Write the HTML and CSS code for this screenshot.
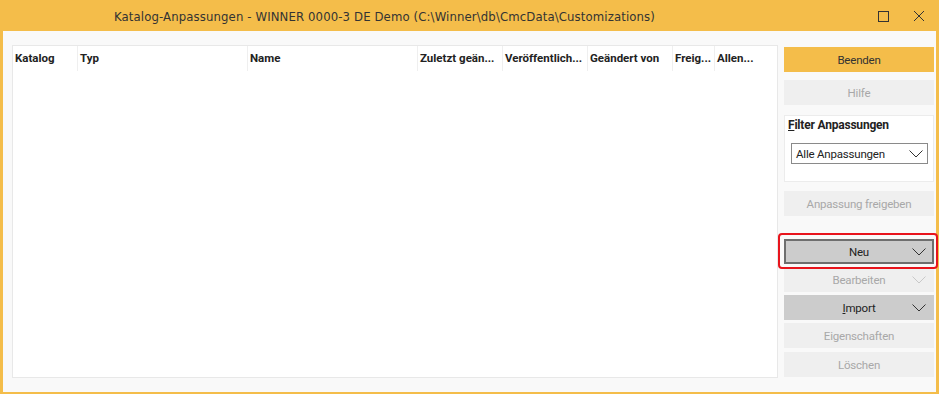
FILE: index.html
```html
<!DOCTYPE html>
<html lang="de">
<head>
    <meta charset="UTF-8">
    <title>Katalog-Anpassungen</title>
    <link rel="stylesheet" href="styles.css">
</head>
<body>
    <div class="window">
        <div class="titlebar">
            <span class="title">Katalog-Anpassungen - WINNER 0000-3 DE Demo (C:\Winner\db\CmcData\Customizations)</span>
            <span class="win-btn">
                <svg width="12" height="12" viewBox="0 0 12 12"><rect x="1.5" y="1.5" width="10" height="10" fill="none" stroke="#333" stroke-width="1"/></svg>
            </span>
            <span class="win-btn">
                <svg width="12" height="12" viewBox="0 0 12 12"><path d="M1 1 L11 11 M11 1 L1 11" stroke="#333" stroke-width="1"/></svg>
            </span>
        </div>
        <div class="content">
            <div class="list">
                <div class="list-head">
                    <div class="col c-katalog">Katalog</div>
                    <div class="col c-typ">Typ</div>
                    <div class="col c-name">Name</div>
                    <div class="col c-mid">Zuletzt geän...</div>
                    <div class="col c-mid">Veröffentlich...</div>
                    <div class="col c-mid">Geändert von</div>
                    <div class="col c-small">Freig...</div>
                    <div class="col c-small">Allen...</div>
                </div>
            </div>

            <div class="side">
                <div class="btn primary">Beenden</div>
                <div class="btn disabled gap-8">Hilfe</div>

                <div class="group">
                    <div class="group-title"><u>F</u>ilter Anpassungen</div>
                    <div class="select">
                        <span>Alle Anpassungen</span>
                        <svg width="14" height="8" viewBox="0 0 14 8"><polyline points="0.5,0.5 7,7 13.5,0.5" fill="none" stroke="#333" stroke-width="1"/></svg>
                    </div>
                </div>

                <div class="btn disabled gap-9">Anpassung freigeben</div>

                <div class="highlight">
                    <div class="btn drop active">
                        <span></span>
                        <span>Neu</span>
                        <svg width="14" height="8" viewBox="0 0 14 8"><polyline points="0.5,0.5 7,7 13.5,0.5" fill="none" stroke="#333" stroke-width="1"/></svg>
                    </div>
                </div>
                <div class="btn drop disabled gap-3">
                    <span></span>
                    <span>Bearbeiten</span>
                    <svg width="14" height="8" viewBox="0 0 14 8"><polyline points="0.5,0.5 7,7 13.5,0.5" fill="none" stroke="#c8c8c8" stroke-width="1"/></svg>
                </div>
                <div class="btn drop plain gap-3">
                    <span></span>
                    <span><u>I</u>mport</span>
                    <svg width="14" height="8" viewBox="0 0 14 8"><polyline points="0.5,0.5 7,7 13.5,0.5" fill="none" stroke="#333" stroke-width="1"/></svg>
                </div>
                <div class="btn disabled gap-3">Eigenschaften</div>
                <div class="btn disabled gap-4">Löschen</div>
            </div>
        </div>
    </div>
</body>
</html>
```

FILE: styles.css
```css
body { margin: 0; background: #fff; font-family: Roboto, "Noto Sans", sans-serif; font-size: 12px; color: #222; }

.window {
    width: 939px; height: 394px; background: #f4bd4a;
    display: flex; flex-direction: column;
}
.titlebar { height: 31px; flex-shrink: 0; display: flex; align-items: center; }
.title {
    padding-left: 114px; font-family: "DejaVu Sans Condensed", "Liberation Sans Narrow", sans-serif;
    font-size: 13px; letter-spacing: 0.12px; color: #333; flex: 1; padding-top: 2px;
}
.win-btn { width: 12px; height: 12px; margin-right: 24px; display: flex; }
.win-btn:last-child { margin-right: 14px; }

.content {
    flex: 1; min-height: 0; margin: 0 3px 2px 3px; background: #f9f9f9;
    display: grid; grid-template-columns: 766px 150px; gap: 6px;
    padding: 14px 2px 14px 9px;
}

.list { background: #fff; border: 1px solid #e8e8e8; }
.list-head { display: flex; height: 25px; }
.col {
    box-sizing: border-box; border-right: 1px solid #efefef; padding: 0 2px;
    font-weight: bold; font-size: 11.5px; line-height: 25px; color: #222;
    white-space: nowrap; overflow: hidden;
}
.c-katalog { width: 65px; }
.c-typ, .c-name { width: 170px; }
.c-mid { width: 85px; }
.c-small { width: 42px; }
.c-small:last-child { width: 43px; border-right: none; }

.side { display: flex; flex-direction: column; padding-top: 2px; font-size: 11.5px; letter-spacing: -0.2px; }
.btn {
    height: 25px; flex-shrink: 0; box-sizing: border-box; display: flex; align-items: center;
    justify-content: center;
}
.primary { background: #f4bd4a; color: #333; }
.disabled { background: #efefef; color: #a8a8a8; }
.plain { background: #cccccc; color: #222; }
.active { background: #cccccc; color: #222; border: 2px solid #6e6e6e; }
.drop { display: grid; grid-template-columns: 1fr auto 1fr; padding: 0 8px 0 8px; }
.drop svg { justify-self: end; }
.active.drop { padding: 0 6px; }

.gap-3 { margin-top: 3px; }
.gap-4 { margin-top: 4px; }
.gap-8 { margin-top: 8px; }
.gap-9 { margin-top: 9px; }

.group {
    margin-top: 10px; height: 67px; flex-shrink: 0; box-sizing: border-box;
    background: #fff; border: 1px solid #ececec; padding: 2px 5px 0 3px;
}
.group-title { font-weight: bold; font-size: 12px; line-height: 14px; color: #222; }
.group-title u { text-decoration-thickness: 1px; }
.select {
    margin: 11px 0 0 3px; height: 21px; box-sizing: border-box;
    border: 1px solid #8a8a8a; display: flex; align-items: center;
    justify-content: space-between; padding: 0 4px 0 4px; color: #222;
}

.highlight {
    position: relative; z-index: 1; flex-shrink: 0;
    margin: 17px -4px -5px -6px; padding: 4px 2px 3px 4px;
    border: 2px solid #e8141c; border-radius: 4px;
}
```
